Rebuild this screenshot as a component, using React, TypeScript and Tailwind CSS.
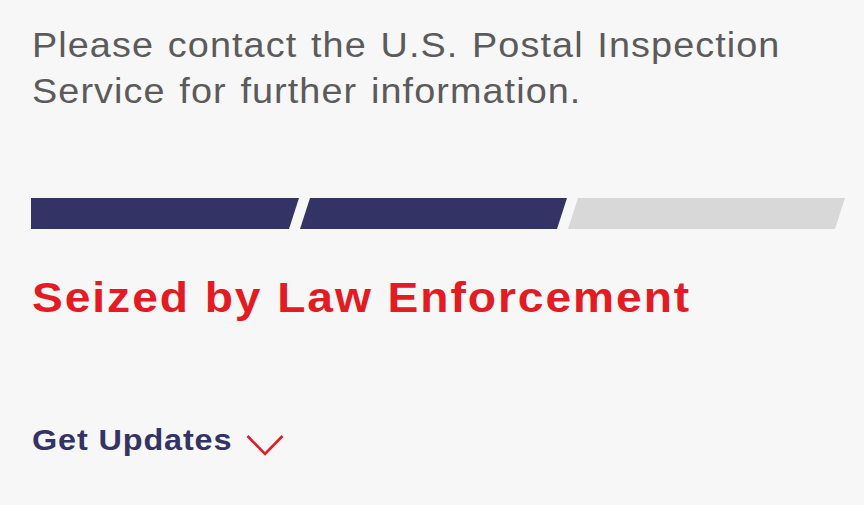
import React from 'react';

const segments = [
  { w: 'w-[268px]', clip: '[clip-path:polygon(0_0,100%_0,calc(100%-10px)_100%,0_100%)]', color: 'bg-[#333366]' },
  { w: 'w-[267px]', clip: '[clip-path:polygon(10px_0,100%_0,calc(100%-10px)_100%,0_100%)]', color: 'bg-[#333366]' },
  { w: 'w-[277px]', clip: '[clip-path:polygon(10px_0,100%_0,calc(100%-10px)_100%,0_100%)]', color: 'bg-[#d8d8d8]' },
];

const App: React.FC = () => {
  return (
    <div className="w-[864px] h-[505px] bg-[#f7f7f7] overflow-hidden font-['Liberation_Sans',Arial,sans-serif]">
      <div className="pl-[32px] pt-[22px]">
        <p className="origin-left scale-x-[1.08] text-[35px] leading-[46px] tracking-[1px] [word-spacing:2px] text-[#5b5b5b]">
          Please contact the U.S. Postal Inspection
          <br />
          Service for further information.
        </p>

        {/* progress */}
        <div className="flex gap-[1px] mt-[84px] -ml-[1px]">
          {segments.map((s, i) => (
            <div key={i} className={`h-[31px] ${s.w} ${s.clip} ${s.color}`} />
          ))}
        </div>

        <h2 className="mt-[43px] origin-left scale-x-[1.1] text-[42px] leading-[52px] font-bold tracking-[1.75px] text-[#e31b23]">
          Seized by Law Enforcement
        </h2>

        <button className="mt-[98px] flex items-center gap-[28px] text-[30px] leading-[36px] font-bold text-[#333366]">
          <span className="inline-block origin-left scale-x-[1.08] tracking-[0.8px]">Get Updates</span>
          <svg width="38" height="32" viewBox="0 0 38 32" fill="none">
            <path d="M1.5 12L19 30L36.5 12" stroke="#e31b23" strokeWidth="2.6" />
          </svg>
        </button>
      </div>
    </div>
  );
};

export default App;
